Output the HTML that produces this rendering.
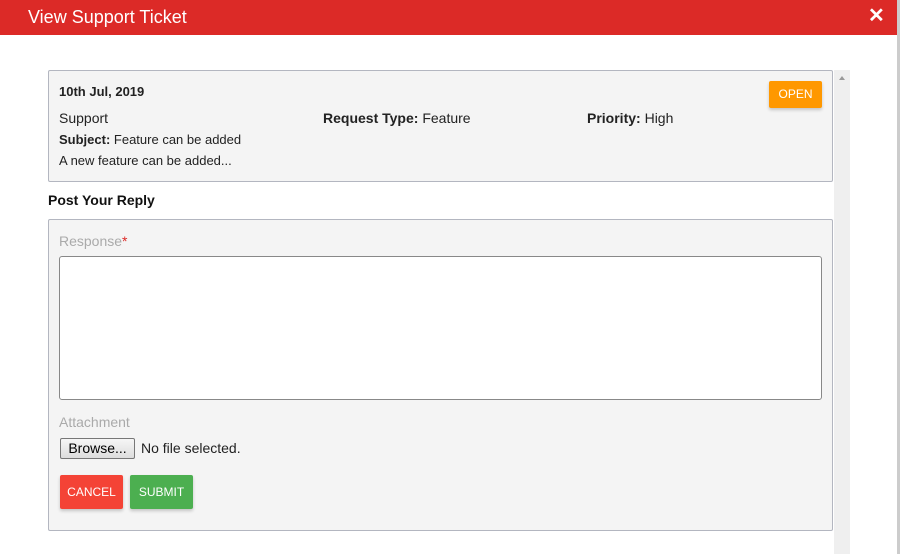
<!DOCTYPE html>
<html><head><style>
body{margin:0;width:900px;height:554px;overflow:hidden;background:#fff;font-family:"Liberation Sans",sans-serif;position:relative}
.hdr{position:absolute;left:0;top:0;width:897px;height:35px;background:#dc2a27;color:#fff}
.hdr .t{position:absolute;left:28px;top:7px;font-size:18px}
.hdr .x{position:absolute;left:868px;top:3px;font-size:20px;font-weight:bold}
.edge{position:absolute;left:897px;top:0;width:3px;height:554px;background:#ccc}
.sb{position:absolute;left:834px;top:70px;width:16px;height:484px;background:#efefef}
.sb:before{content:"";position:absolute;left:5px;top:6px;border:3px solid transparent;border-bottom:4px solid #999;border-top:0}
.card{position:absolute;left:48px;width:783px;background:#f4f4f4;border:1px solid #b3b6c0;border-radius:2px}
.c1{top:70px;height:110px}
.c2{top:219px;height:310px}
.p{position:absolute;font-size:14px;color:#222}
.b{font-weight:bold}
.btn{position:absolute;color:#fff;font-size:12px;text-align:center;border-radius:2px;box-shadow:0 2px 3px rgba(0,0,0,.2)}
</style></head><body>
<div class="hdr"><span class="t">View Support Ticket</span><span class="x">✕</span></div>
<div class="edge"></div>
<div class="sb"></div>
<div class="card c1">
<div class="p b" style="left:10px;top:13px;font-size:13px">10th Jul, 2019</div>
<div class="btn" style="left:720px;top:10px;width:53px;height:27px;line-height:27px;background:#ff9800">OPEN</div>
<div class="p" style="left:10px;top:39px">Support</div>
<div class="p" style="left:274px;top:39px"><b>Request Type:</b> Feature</div>
<div class="p" style="left:538px;top:39px"><b>Priority:</b> High</div>
<div class="p" style="left:10px;top:61px;font-size:13px"><b>Subject:</b> Feature can be added</div>
<div class="p" style="left:10px;top:82px;font-size:13px">A new feature can be added...</div>
</div>
<div class="p b" style="left:48px;top:192px;font-size:14px;color:#111">Post Your Reply</div>
<div class="card c2">
<div class="p" style="left:10px;top:13px;color:#aaa">Response<span style="color:#dc2a27">*</span></div>
<div style="position:absolute;left:10px;top:36px;width:761px;height:142px;background:#fff;border:1px solid #888;border-radius:3px"></div>
<div class="p" style="left:10px;top:194px;color:#aaa">Attachment</div>
<div style="position:absolute;left:11px;top:218px;width:73px;height:19px;border:1px solid #777;border-radius:2px;background:linear-gradient(#f6f6f6,#ddd);font-size:14px;text-align:center;line-height:19px">Browse...</div>
<div class="p" style="left:92px;top:220px">No file selected.</div>
<div class="btn" style="left:11px;top:255px;width:63px;height:34px;line-height:34px;background:#f44336">CANCEL</div>
<div class="btn" style="left:81px;top:255px;width:63px;height:34px;line-height:34px;background:#4caf50">SUBMIT</div>
</div>
</body></html>
